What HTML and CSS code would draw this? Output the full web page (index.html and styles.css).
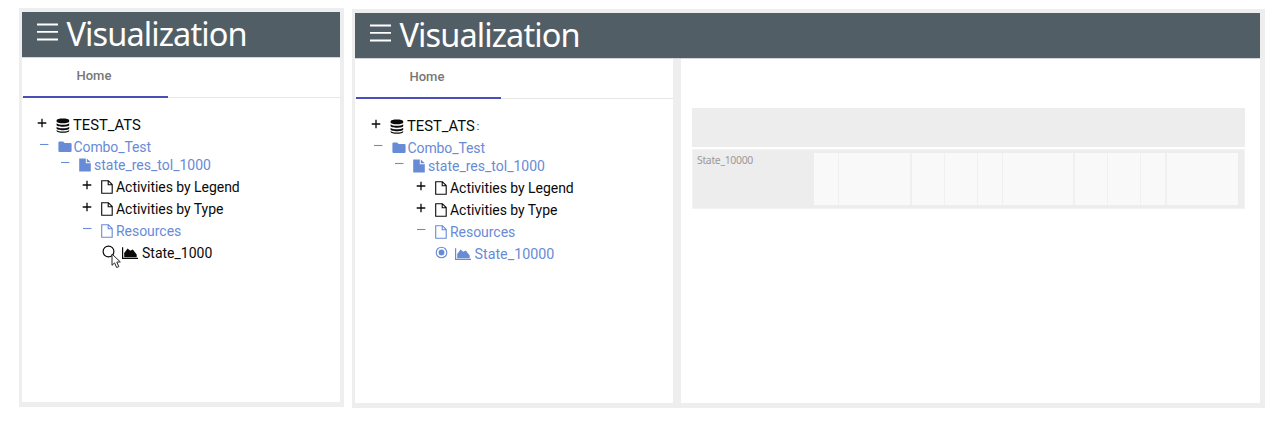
FILE: index.html
```html
<!DOCTYPE html>
<html lang="en">
<head>
<meta charset="utf-8">
<title>Visualization</title>
<link rel="stylesheet" href="styles.css">
</head>
<body>
<svg class="defs" width="0" height="0" aria-hidden="true">
  <symbol id="plus" viewBox="0 0 10 10"><path d="M5 .7v8.6M.7 5h8.6" fill="none" stroke="currentColor" stroke-width="1.3"/></symbol>
  <symbol id="minus" viewBox="0 0 10 10"><path d="M1 4.500h8.400" fill="none" stroke="currentColor" stroke-width="1.100"/></symbol>
  <symbol id="db" viewBox="0 0 14 15"><path d="M.6 2.4C.6-.2 13.2-.2 13.2 2.4v1C13.2 5.8.6 5.8.6 3.4zM.6 5.2c2 2 10.600 2 12.600 0v1.800c0 2.300-12.600 2.300-12.600 0zM.6 8.700c2 2 10.600 2 12.600 0v1.800c0 2.300-12.600 2.300-12.600 0zM.6 12.100c2 2 10.600 2 12.600 0v.6c0 2.700-12.600 2.700-12.600 0z" fill="currentColor"/></symbol>
  <symbol id="folder" viewBox="0 0 14 12"><path d="M.4 1.600Q.4.500 1.500.5h3.600l1.500 1.600h5.800q1.200 0 1.200 1.200v6.500q0 1.200-1.200 1.200H1.600Q.4 11 .4 9.800z" fill="currentColor"/></symbol>
  <symbol id="file-solid" viewBox="0 0 12 14"><path d="M.2.500h6.600v4.700h5v8.300H.2zM7.800.500l4 3.800h-4z" fill="currentColor"/></symbol>
  <symbol id="file" viewBox="0 0 12 14"><path d="M.7.700h6.700l3.800 3.800v8.800H.7zM7.200.900v3.900h3.900" fill="none" stroke="currentColor" stroke-width="1.100"/></symbol>
  <symbol id="area" viewBox="0 0 16 12"><path d="M.6.200v11.200H16" fill="none" stroke="currentColor" stroke-width="1.200"/><path d="M2.200 10.200V6l3.400-4.600 2.600 2.300 2.600-1.200 3.900 4.900v2.800z" fill="currentColor"/></symbol>
</svg>
<main class="stage">
  <section class="window window-small">
    <header class="bar">
      <svg class="burger" viewBox="0 0 21 18"><path d="M0 1.500h21M0 8.900h21M0 16.500h21" stroke="#fff" stroke-width="1.900"/></svg>
      <h1 class="title">Visualization</h1>
    </header>
    <div class="side">
      <nav class="tabs"><a class="tab">Home</a></nav>
      <ul class="tree">
        <li class="row lvl0"><svg class="toggle"><use href="#plus"/></svg><svg class="icon db"><use href="#db"/></svg><span>TEST_ATS</span></li>
        <li class="row lvl1 active"><svg class="toggle"><use href="#minus"/></svg><svg class="icon folder"><use href="#folder"/></svg><span>Combo_Test</span></li>
        <li class="row lvl2 active"><svg class="toggle"><use href="#minus"/></svg><svg class="icon doc"><use href="#file-solid"/></svg><span>state_res_tol_1000</span></li>
        <li class="row lvl3"><svg class="toggle"><use href="#plus"/></svg><svg class="icon doc"><use href="#file"/></svg><span>Activities by Legend</span></li>
        <li class="row lvl3"><svg class="toggle"><use href="#plus"/></svg><svg class="icon doc"><use href="#file"/></svg><span>Activities by Type</span></li>
        <li class="row lvl3 active"><svg class="toggle"><use href="#minus"/></svg><svg class="icon doc"><use href="#file"/></svg><span>Resources</span></li>
        <li class="row leaf">
          <span class="choice"><svg class="radio" viewBox="0 0 13 13"><circle cx="6.500" cy="6.500" r="5.400" fill="none" stroke="currentColor" stroke-width="1.200"/></svg>
            <svg class="cursor" viewBox="0 0 11 16"><path d="M1 1v11.300l2.600-2.400 2 4.600 2.200-.9-2-4.500 3.500-.2z" fill="#fff" stroke="#222" stroke-width="1"/></svg></span>
          <svg class="icon area"><use href="#area"/></svg><span>State_1000</span></li>
      </ul>
    </div>
  </section>
  <section class="window window-large">
    <header class="bar">
      <svg class="burger" viewBox="0 0 21 18"><path d="M0 1.500h21M0 8.900h21M0 16.500h21" stroke="#fff" stroke-width="1.900"/></svg>
      <h1 class="title">Visualization</h1>
    </header>
    <div class="body">
      <div class="side">
        <nav class="tabs"><a class="tab">Home</a></nav>
        <ul class="tree">
          <li class="row lvl0"><svg class="toggle"><use href="#plus"/></svg><svg class="icon db"><use href="#db"/></svg><span>TEST_ATS</span><span class="mark">:</span></li>
          <li class="row lvl1 active"><svg class="toggle"><use href="#minus"/></svg><svg class="icon folder"><use href="#folder"/></svg><span>Combo_Test</span></li>
          <li class="row lvl2 active"><svg class="toggle"><use href="#minus"/></svg><svg class="icon doc"><use href="#file-solid"/></svg><span>state_res_tol_1000</span></li>
          <li class="row lvl3"><svg class="toggle"><use href="#plus"/></svg><svg class="icon doc"><use href="#file"/></svg><span>Activities by Legend</span></li>
          <li class="row lvl3"><svg class="toggle"><use href="#plus"/></svg><svg class="icon doc"><use href="#file"/></svg><span>Activities by Type</span></li>
          <li class="row lvl3 active"><svg class="toggle"><use href="#minus"/></svg><svg class="icon doc"><use href="#file"/></svg><span>Resources</span></li>
          <li class="row leaf active">
            <span class="choice"><svg class="radio" viewBox="0 0 13 13"><circle cx="6.500" cy="6.500" r="5.300" fill="none" stroke="currentColor" stroke-width="1.100"/><circle cx="6.500" cy="6.500" r="2.900" fill="currentColor"/></svg></span>
            <svg class="icon area"><use href="#area"/></svg><span>State_10000</span></li>
        </ul>
      </div>
      <div class="content">
        <div class="chart-head"></div>
        <div class="chart">
          <div class="chart-label">State_10000</div>
          <div class="cells"><i></i><i></i><i></i><i></i><i></i><i></i><i></i><i></i><i></i><i></i></div>
        </div>
      </div>
    </div>
  </section>
</main>
</body>
</html>
```
FILE: styles.css
```css
* { box-sizing: border-box; }
body { margin: 0; background: #fff; font-family: Roboto, sans-serif; }
svg { display: block; flex: none; }
.defs { position: absolute; }
.stage { display: flex; align-items: flex-start; gap: 8px; height: 428px; padding: 8px 0 0 19px; overflow: hidden; }
.window { display: flex; flex-direction: column; height: 399px; border: solid #eee; border-width: 4px 4px 5px 3px; flex: none; }
.window-small { width: 325px; }
.window-large { width: 913px; margin-top: 1px; border-right-width: 5px; }
.bar { display: flex; align-items: flex-start; height: 46px; flex: none; background: #525e66; border-bottom: 1px solid #d2d6da; padding: 11px 0 0 15px; }
.burger { width: 21px; height: 18px; }
.title { margin: -12px 0 0 8.500px; font: 400 32.500px/46px "Noto Sans", sans-serif; letter-spacing: -.9px; color: #fff; }
.body { display: flex; flex: 1; }
.side { display: flex; flex-direction: column; width: 318px; }
.body .side { width: 326px; border-right: 8px solid #eee; }
.tabs { display: flex; height: 40px; border-bottom: 1px solid #e6e6e6; }
.tab { width: 145px; height: 40px; margin-left: 1px; padding-left: 53.500px; border-bottom: 2px solid #4a4eb8; font-weight: 500; font-size: 13px; line-height: 36px; color: #777; }
.tree { list-style: none; margin: 0; padding: 16px 0 0; font-size: 14px; color: #0a0a0a; }
.row { display: flex; align-items: center; height: 22px; white-space: nowrap; }
.active { color: #688bd6; }
.toggle { width: 10px; height: 10px; margin-bottom: 4px; }
.lvl0 { padding-left: 15px; font-size: 14.800px; }
.lvl1 { padding-left: 16.500px; letter-spacing: -.1px; }
.lvl2 { padding-left: 38px; margin-top: -4px; }
.lvl3 { padding-left: 60px; letter-spacing: -.04px; }
.leaf { padding-left: 80px; }
.body .lvl0 { padding-left: 16px; }
.body .lvl1 { padding-left: 17.500px; }
.body .lvl2 { padding-left: 39px; }
.body .lvl3 { padding-left: 61px; }
.body .leaf { padding-left: 79.500px; font-size: 14.300px; }
.db { width: 14px; height: 15px; margin: 0 3px 0 9px; }
.folder { width: 14px; height: 12px; margin: 0 2px 0 9px; }
.doc { width: 12px; height: 14px; margin: 0 3px 0 9px; }
.choice { position: relative; margin-bottom: 3px; }
.radio { width: 13px; height: 13px; }
.cursor { position: absolute; left: 9px; top: 8px; width: 11px; height: 16px; }
.area { width: 16px; height: 12px; margin: 0 4px 0 7px; }
.mark { margin-left: 2px; font-size: 10px; }
.content { flex: 1; padding: 49px 15px 0 11px; }
.chart-head { height: 39px; background: #ededed; }
.chart { display: flex; height: 60px; margin-top: 2px; background: #ededed; border: 1px solid #f2f2f2; }
.chart-label { width: 121px; padding-left: 4px; font: 10.400px/20px "Noto Sans", sans-serif; letter-spacing: -.3px; color: #999; }
.cells { display: grid; grid-template-columns: 24px 71px 32px 32px 24px 70px 32px 32px 24px 71px; column-gap: 1.300px; margin: 3px 0 3px; background: #f0f0f0; }
.cells i { background: #f9f9f9; }
```
